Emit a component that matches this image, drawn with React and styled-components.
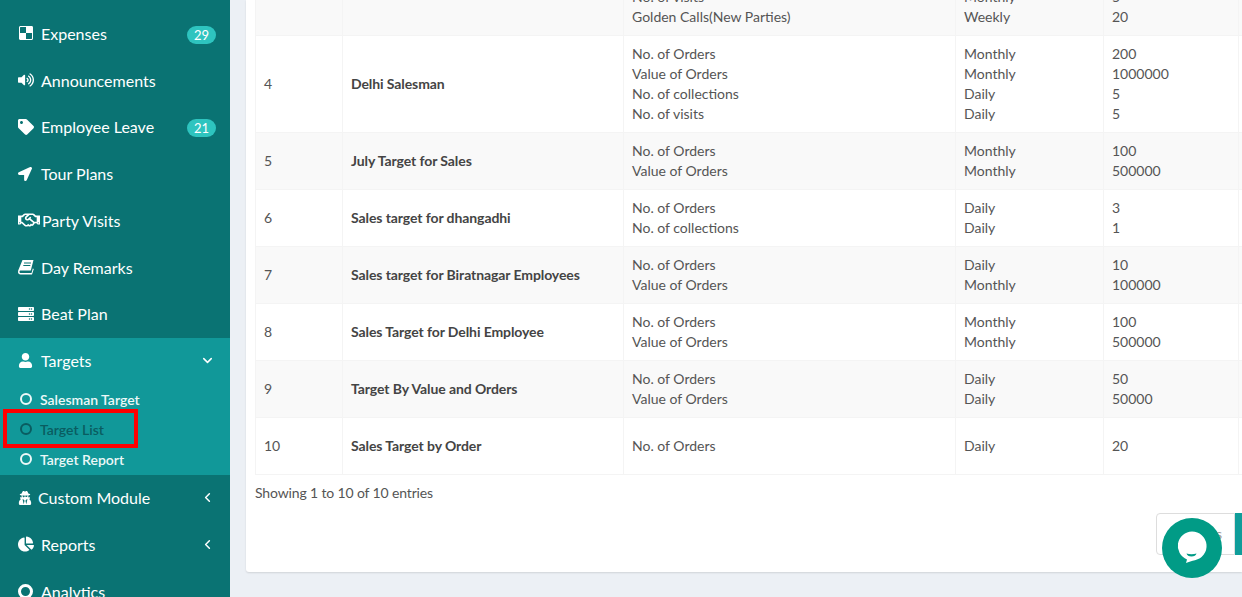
import React from "react";
import styled, { createGlobalStyle } from "styled-components";
import {
  FaDelicious,
  FaVolumeUp,
  FaTag,
  FaLocationArrow,
  FaRegHandshake,
  FaServer,
  FaUser,
  FaUserSecret,
  FaChartPie,
} from "react-icons/fa";
import { ChevronDown, ChevronLeft } from "lucide-react";

const GlobalStyle = createGlobalStyle`
  html, body {
    margin: 0;
    padding: 0;
    height: 100%;
    overflow: hidden;
    font-family: Lato, "Open Sans", sans-serif;
    background: #ecf0f5;
  }
`;

const Page = styled.div`
  display: flex;
  width: 100%;
  height: 597px;
  overflow: hidden;
`;

const Sidebar = styled.nav`
  flex: 0 0 230px;
  box-sizing: border-box;
  height: 100%;
  padding-top: 10.4px;
  background: #0a7373;
  overflow: hidden;
`;

const MenuItem = styled.div`
  display: flex;
  align-items: center;
  box-sizing: border-box;
  height: 46.75px;
  padding: 0 15px 1px 18px;
  color: #fff;
  font-size: 16px;
  flex-shrink: 0;
`;

const MenuIcon = styled.span`
  display: flex;
  align-items: center;
  flex: 0 0 ${(p) => p.$width || 23}px;
  font-size: 16px;
`;

const MenuLabel = styled.span`
  flex: 1;
  white-space: nowrap;
`;

const Badge = styled.span`
  box-sizing: border-box;
  width: 29px;
  height: 18px;
  margin: 3px -1px 0 0;
  border-radius: 9px;
  background: #2ec4bf;
  color: #fff;
  font-size: 13px;
  line-height: 18px;
  text-align: center;
`;

const Caret = styled.span`
  display: flex;
`;

const ActiveGroup = styled.div`
  position: relative;
  height: 137px;
  background: #119899;
`;

const SubItem = styled.div`
  display: flex;
  align-items: center;
  gap: 8px;
  height: 30px;
  padding-left: 20px;
  font-size: 14px;
  font-weight: 600;
  color: ${(p) => (p.$current ? "#0a5c60" : "#ecf8f8")};
`;

const Ring = styled.span`
  display: block;
  box-sizing: border-box;
  width: ${(p) => p.$size}px;
  height: ${(p) => p.$size}px;
  border: ${(p) => p.$stroke}px solid currentColor;
  border-radius: 50%;
`;

const Highlight = styled.div`
  position: absolute;
  left: 3px;
  top: 71px;
  width: 135px;
  height: 39px;
  box-sizing: border-box;
  border: 4px solid #f00;
`;

const Main = styled.main`
  flex: 1;
  min-width: 0;
  padding-left: 16px;
  overflow: hidden;
`;

const Card = styled.section`
  position: relative;
  box-sizing: border-box;
  height: 572px;
  background: #fff;
  border-radius: 0 0 0 3px;
  box-shadow: 0 1px 2px rgba(0, 0, 0, 0.12);
  padding-left: 9px;
  overflow: hidden;
`;

const TableClip = styled.div`
  margin-top: -22px;
  width: 1100px;
`;

const Table = styled.table`
  border-collapse: collapse;
  table-layout: fixed;
  width: 1100px;
  font-size: 14px;
  line-height: 20px;
  color: #555;
`;

const Row = styled.tr`
  background: ${(p) => (p.$striped ? "#f9f9f9" : "#fff")};
`;

const Cell = styled.td`
  box-sizing: border-box;
  height: 57px;
  padding: 8px;
  border: 1px solid #f4f4f4;
  vertical-align: middle;
  white-space: nowrap;
`;

const NameCell = styled(Cell)`
  font-weight: 700;
  color: #444;
  letter-spacing: -0.09px;
`;

const Line = styled.div``;

const Info = styled.div`
  margin-top: 8px;
  font-size: 14px;
  line-height: 20px;
  letter-spacing: -0.14px;
  color: #555;
`;

const Pager = styled.div`
  position: absolute;
  top: 513px;
  left: 910px;
  display: flex;
  height: 42px;
`;

const PagerButton = styled.div`
  box-sizing: border-box;
  width: 79px;
  padding: 0 12px;
  border: 1px solid #ddd;
  border-radius: 4px 0 0 4px;
  font-size: 14px;
  line-height: 40px;
  color: #999;
  text-align: right;
`;

const PagerCurrent = styled.div`
  width: 40px;
  background: #0f9d9a;
`;

const ChatBubble = styled.div`
  position: absolute;
  left: 1162px;
  top: 518px;
  width: 60px;
  height: 60px;
`;

const BookIcon = () => (
  <svg width="16" height="16" viewBox="0 0 16 16">
    <path
      d="M4.500 1H15.500L12.800 11.500H2.800C2 11.500 1.500 12 1.500 12.800S2 14 2.800 14H13.500L14.800 9.500 15.800 10 14 15.500H2.500C1 15.500 0 14.300 0 13 0 12 .3 11 .8 10L4.500 1z"
      fill="currentColor"
    />
    <path d="M6 4h7M5.300 6.500h7" stroke="#0a7373" strokeWidth="1" />
  </svg>
);

const menuTop = [
  { label: "Expenses", icon: <FaDelicious /> },
  { label: "Announcements", icon: <FaVolumeUp /> },
  { label: "Employee Leave", icon: <FaTag /> },
  { label: "Tour Plans", icon: <FaLocationArrow size={14} /> },
  { label: "Party Visits", icon: <FaRegHandshake size={22} />, width: 24 },
  { label: "Day Remarks", icon: <BookIcon /> },
  { label: "Beat Plan", icon: <FaServer /> },
];
menuTop[0].badge = 29;
menuTop[2].badge = 21;

const rows = [
  { no: "", name: "", targets: [["No. of visits", "Monthly", "5"], ["Golden Calls(New Parties)", "Weekly", "20"]] },
  { no: 4, name: "Delhi Salesman", targets: [["No. of Orders", "Monthly", "200"], ["Value of Orders", "Monthly", "1000000"], ["No. of collections", "Daily", "5"], ["No. of visits", "Daily", "5"]] },
  { no: 5, name: "July Target for Sales", targets: [["No. of Orders", "Monthly", "100"], ["Value of Orders", "Monthly", "500000"]] },
  { no: 6, name: "Sales target for dhangadhi", targets: [["No. of Orders", "Daily", "3"], ["No. of collections", "Daily", "1"]] },
  { no: 7, name: "Sales target for Biratnagar Employees", targets: [["No. of Orders", "Daily", "10"], ["Value of Orders", "Monthly", "100000"]] },
  { no: 8, name: "Sales Target for Delhi Employee", targets: [["No. of Orders", "Monthly", "100"], ["Value of Orders", "Monthly", "500000"]] },
  { no: 9, name: "Target By Value and Orders", targets: [["No. of Orders", "Daily", "50"], ["Value of Orders", "Daily", "50000"]] },
  { no: 10, name: "Sales Target by Order", targets: [["No. of Orders", "Daily", "20"]] },
];

const columnWidths = [87, 281, 332, 148, 135, 117];

const App = () => {
  return (
    <Page>
      <GlobalStyle />
      <Sidebar>
        {menuTop.map((item) => (
          <MenuItem key={item.label}>
            <MenuIcon $width={item.width}>{item.icon}</MenuIcon>
            <MenuLabel>{item.label}</MenuLabel>
            {item.badge && <Badge>{item.badge}</Badge>}
          </MenuItem>
        ))}
        <ActiveGroup>
          <MenuItem>
            <MenuIcon><FaUser size={15} /></MenuIcon>
            <MenuLabel>Targets</MenuLabel>
            <Caret><ChevronDown size={15} strokeWidth={2.4} /></Caret>
          </MenuItem>
          <SubItem><Ring $size={12} $stroke={2.5} />Salesman Target</SubItem>
          <SubItem $current><Ring $size={12} $stroke={2.5} />Target List</SubItem>
          <SubItem><Ring $size={12} $stroke={2.5} />Target Report</SubItem>
          <Highlight />
        </ActiveGroup>
        <MenuItem>
          <MenuIcon $width={20}><FaUserSecret size={14} /></MenuIcon>
          <MenuLabel>Custom Module</MenuLabel>
          <Caret><ChevronLeft size={15} strokeWidth={2.4} /></Caret>
        </MenuItem>
        <MenuItem>
          <MenuIcon><FaChartPie /></MenuIcon>
          <MenuLabel>Reports</MenuLabel>
          <Caret><ChevronLeft size={15} strokeWidth={2.4} /></Caret>
        </MenuItem>
        <MenuItem>
          <MenuIcon><Ring $size={15} $stroke={3} /></MenuIcon>
          <MenuLabel>Analytics</MenuLabel>
        </MenuItem>
      </Sidebar>
      <Main>
        <Card>
          <TableClip>
            <Table>
              <colgroup>
                {columnWidths.map((w, i) => (
                  <col key={i} width={w} />
                ))}
              </colgroup>
              <tbody>
                {rows.map((row, i) => (
                  <Row key={i} $striped={i % 2 === 0}>
                    <Cell>{row.no}</Cell>
                    <NameCell>{row.name}</NameCell>
                    {[0, 1, 2].map((col) => (
                      <Cell key={col}>
                        {row.targets.map((t, j) => (
                          <Line key={j}>{t[col]}</Line>
                        ))}
                      </Cell>
                    ))}
                    <Cell />
                  </Row>
                ))}
              </tbody>
            </Table>
          </TableClip>
          <Info>Showing 1 to 10 of 10 entries</Info>
          <Pager>
            <PagerButton>Previous</PagerButton>
            <PagerCurrent />
          </Pager>
        </Card>
      </Main>
      <ChatBubble>
        <svg width="60" height="60" viewBox="0 0 60 60">
          <circle cx="30" cy="30" r="30" fill="#019b86" />
          <path d="M30 13.500a14.500 14.500 0 0 1 3 28.700c-3 .7-6.500 2-9 2.800l1-3.500A14.500 14.500 0 0 1 30 13.500z" fill="#fff" />
          <path d="M24.500 35.500c3 1 7 1 10 0-.5 2-2.300 3-5 3s-4.500-1-5-3z" fill="#019b86" />
        </svg>
      </ChatBubble>
    </Page>
  );
};

export default App;
